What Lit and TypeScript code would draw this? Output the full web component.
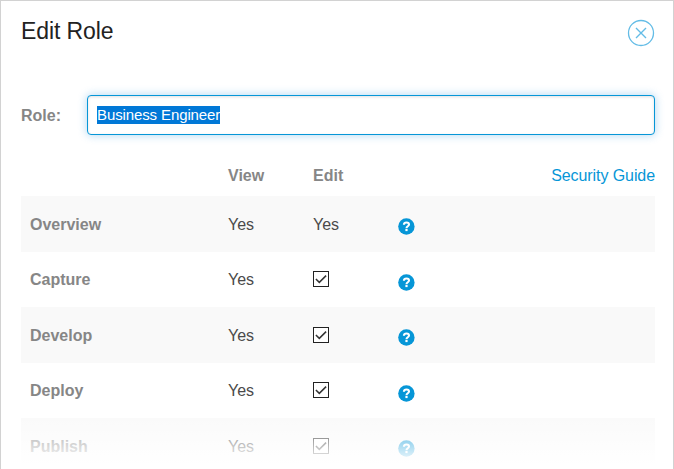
import { LitElement, html, css, svg } from "lit";
import { customElement, property } from "lit/decorators.js";

interface Permission {
  area: string;
  editable: boolean;
}

const PERMISSIONS: Permission[] = [
  { area: "Overview", editable: false },
  { area: "Capture", editable: true },
  { area: "Develop", editable: true },
  { area: "Deploy", editable: true },
  { area: "Publish", editable: true },
];

const questionMark = svg`
  <circle cx="8.4" cy="8.5" r="8.2" fill="#0696d7"></circle>
  <path d="M5.9 6.8C6 5.2 7 4.5 8.5 4.5c1.5 0 2.5.8 2.5 2 0 1.8-2.5 1.7-2.5 3.7" fill="none" stroke="#fff" stroke-width="2.1"></path>
  <rect x="7.4" y="11" width="2.2" height="2.1" fill="#fff"></rect>`;

@customElement("help-icon")
export class HelpIcon extends LitElement {
  static styles = css`
    :host { display: block; width: 17px; height: 17px; }
    svg { display: block; }
  `;
  render() {
    return html`<svg width="17" height="17" viewBox="0 0 17 17">${questionMark}</svg>`;
  }
}

@customElement("check-box")
export class CheckBox extends LitElement {
  static styles = css`
    :host { display: block; width: 16px; height: 16px; }
    svg { display: block; }
  `;
  render() {
    return html`<svg width="16" height="16" viewBox="0 0 16 16">
      <rect x="0.5" y="0.5" width="15" height="15" fill="#fff" stroke="#222"></rect>
      <path d="M2.9 8 6.3 11.4 13.1 4.6" fill="none" stroke="#333" stroke-width="1.5"></path>
    </svg>`;
  }
}

@customElement("permission-row")
export class PermissionRow extends LitElement {
  @property({ attribute: false }) permission!: Permission;

  static styles = css`
    :host {
      display: grid;
      grid-template-columns: 198px 85px 85px 1fr;
      align-items: center;
      box-sizing: border-box;
      height: 55.5px;
      padding-left: 9px;
      color: #4a4a4a;
    }
    .area { font-weight: bold; color: #868686; }
    span { padding-top: 2px; }
    help-icon { margin-top: 6px; }
  `;
  render() {
    const { area, editable } = this.permission;
    return html`
      <span class="area">${area}</span>
      <span>Yes</span>
      ${editable ? html`<check-box></check-box>` : html`<span>Yes</span>`}
      <help-icon></help-icon>
    `;
  }
}

@customElement("app-root")
export class AppRoot extends LitElement {
  static styles = css`
    :host {
      display: block;
      position: relative;
      box-sizing: border-box;
      width: 674px;
      height: 469px;
      overflow: hidden;
      border: 1px solid #d2d2d2;
      border-bottom: 0;
      padding: 0 18px 0 20px;
      background: #fff;
      font: 16px/20px "Liberation Sans", Arial, sans-serif;
    }
    header {
      display: flex;
      justify-content: space-between;
      align-items: flex-start;
      height: 94px;
    }
    h1 {
      margin: 16px 0 0;
      font-size: 23px;
      line-height: 28px;
      letter-spacing: -0.1px;
      font-weight: normal;
      color: #222;
    }
    .close { display: block; margin-top: 18px; }
    .field { display: flex; align-items: center; height: 40px; }
    .label { width: 66px; padding-top: 2px; box-sizing: border-box; font-weight: bold; color: #868686; }
    .input {
      flex: 1;
      box-sizing: border-box;
      height: 40px;
      border: 1px solid #0696d7;
      border-radius: 4px;
      padding: 10px 9px;
      font-size: 15px;
      line-height: 18px;
      letter-spacing: -0.11px;
      background: #fff;
      box-shadow: 0 0 10px rgba(6, 130, 215, 0.33), inset 0 1px 3px rgba(0, 0, 0, 0.12);
    }
    .selected { display: inline-block; background: #0078d7; color: #fff; }
    .columns {
      display: grid;
      grid-template-columns: 207px 85px 1fr auto;
      align-items: center;
      height: 61px;
      box-sizing: border-box;
      padding-top: 20px;
      font-weight: bold;
      color: #868686;
    }
    .guide {
      grid-column: 4;
      font-weight: normal;
      letter-spacing: -0.08px;
      color: #0696d7;
      text-decoration: none;
    }
    .columns span:first-child { grid-column: 2; }
    .striped { background: #f9f9f9; }
    .fade {
      position: absolute;
      left: -1px;
      right: -1px;
      bottom: 0;
      height: 69px;
      background: linear-gradient(rgba(255, 255, 255, 0) 10%, #fff 94%);
    }
  `;
  render() {
    return html`
      <header>
        <h1>Edit Role</h1>
        <svg class="close" width="28" height="28" viewBox="0 0 28 28" fill="none" stroke="#63bce6">
          <circle cx="14" cy="14" r="12.5" stroke-width="1.3"></circle>
          <path d="M9 9 19 19M19 9 9 19" stroke-width="1.4"></path>
        </svg>
      </header>
      <div class="field">
        <span class="label">Role:</span>
        <div class="input"><span class="selected">Business Engineer</span></div>
      </div>
      <div class="columns">
        <span>View</span>
        <span>Edit</span>
        <a class="guide">Security Guide</a>
      </div>
      ${PERMISSIONS.map(
        (p, i) => html`<permission-row class=${i % 2 ? "" : "striped"} .permission=${p}></permission-row>`
      )}
      <div class="fade"></div>
    `;
  }
}
